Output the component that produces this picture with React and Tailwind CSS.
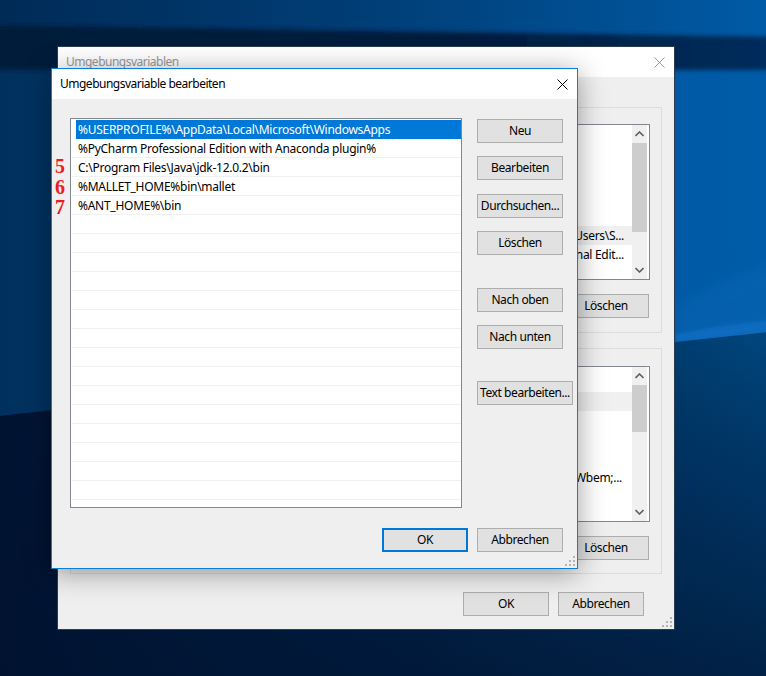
import React from "react"

const ROWS = [
  "%USERPROFILE%\\AppData\\Local\\Microsoft\\WindowsApps",
  "%PyCharm Professional Edition with Anaconda plugin%",
  "C:\\Program Files\\Java\\jdk-12.0.2\\bin",
  "%MALLET_HOME%bin\\mallet",
  "%ANT_HOME%\\bin",
  ...Array(15).fill(""),
]

const Wallpaper = () => (
  <svg className="absolute inset-0" width="766" height="676" viewBox="0 0 766 676">
    <defs>
      <linearGradient id="top" x1="0" x2="1" y1="0" y2="0">
        <stop offset="0" stopColor="#002a55" />
        <stop offset="0.5" stopColor="#003f78" />
        <stop offset="1" stopColor="#005ca8" />
      </linearGradient>
      <linearGradient id="band" x1="0" x2="1" y1="0" y2="0">
        <stop offset="0" stopColor="#001b3a" />
        <stop offset="0.6" stopColor="#001c3d" />
        <stop offset="1" stopColor="#012e5e" />
      </linearGradient>
      <linearGradient id="mid" x1="0" x2="1" y1="0" y2="0">
        <stop offset="0" stopColor="#00305c" />
        <stop offset="0.5" stopColor="#003f78" />
        <stop offset="0.87" stopColor="#005aa6" />
        <stop offset="1" stopColor="#005ca9" />
      </linearGradient>
      <linearGradient id="low" x1="0" x2="0" y1="0" y2="1">
        <stop offset="0" stopColor="#00487f" />
        <stop offset="0.35" stopColor="#003768" />
        <stop offset="1" stopColor="#012043" />
      </linearGradient>
      <linearGradient id="lowLeft" x1="0" x2="1" y1="0" y2="0">
        <stop offset="0" stopColor="#001230" stopOpacity="1" />
        <stop offset="0.55" stopColor="#001230" stopOpacity="0.55" />
        <stop offset="1" stopColor="#001230" stopOpacity="0" />
      </linearGradient>
      <filter id="soft" x="-5%" y="-20%" width="110%" height="140%">
        <feGaussianBlur stdDeviation="2" />
      </filter>
      <filter id="softer" x="-10%" y="-20%" width="120%" height="140%">
        <feGaussianBlur stdDeviation="8" />
      </filter>
    </defs>
    <rect x="-20" y="-20" width="806" height="500" fill="url(#mid)" />
    <rect x="-20" y="-20" width="806" height="60" fill="url(#top)" />
    <polygon points="-20,25 786,37 786,70 -20,70" fill="url(#band)" filter="url(#soft)" />
    <polygon points="676,305 720,282 786,258 786,332 676,340" fill="#0a66b4" opacity="0.45" filter="url(#softer)" />
    <polygon points="676,334 720,326 786,318 786,332 676,342" fill="#0a6cc0" filter="url(#soft)" />
    <polygon points="-20,418 786,330 786,700 -20,700" fill="url(#low)" />
    <polygon points="-20,418 786,330 786,700 -20,700" fill="url(#lowLeft)" />
  </svg>
)

const Grip = ({ color }) => (
  <svg className="absolute right-[1px] bottom-[1px]" width="11" height="11" viewBox="0 0 11 11" fill={color}>
    <rect x="8" y="0" width="2" height="2" />
    <rect x="4" y="4" width="2" height="2" />
    <rect x="8" y="4" width="2" height="2" />
    <rect x="0" y="8" width="2" height="2" />
    <rect x="4" y="8" width="2" height="2" />
    <rect x="8" y="8" width="2" height="2" />
  </svg>
)

const CloseIcon = ({ color }) => (
  <svg width="11" height="11" viewBox="0 0 11 11" stroke={color} strokeWidth="1" fill="none">
    <path d="M0.5 0.5 L10.5 10.5 M10.5 0.5 L0.5 10.5" />
  </svg>
)

const Button = ({ label, primary, className = "w-[86px]" }) => (
  <div
    className={`flex items-center justify-center h-[24px] shrink-0 bg-[#e1e1e1] text-[12px] tracking-[-0.42px] text-black whitespace-nowrap ${
      primary ? "border-2 border-[#0078d7]" : "border border-[#adadad]"
    } ${className}`}
  >
    {label}
  </div>
)

const Chevron = ({ down }) => (
  <svg width="9" height="6" viewBox="0 0 9 6" fill="none" stroke="#606060" strokeWidth="1.6">
    <path d={down ? "M0.5 1 L4.5 5 L8.5 1" : "M0.5 5 L4.5 1 L8.5 5"} />
  </svg>
)

const ScrollBar = ({ thumb }) => (
  <div className="flex flex-col w-[15px] mr-[2px] bg-[#f0f0f0]">
    <div className="flex items-center justify-center h-[18px]"><Chevron /></div>
    <div style={{ height: thumb }} className="bg-[#cdcdcd]" />
    <div className="flex-1" />
    <div className="flex items-center justify-center h-[18px]"><Chevron down /></div>
  </div>
)

const GroupBox = ({ children, thumb, className = "" }) => (
  <div className={`flex flex-col items-end h-[226px] border border-[#dcdcdc] pr-[11px] ${className}`}>
    <div className="flex w-[500px] h-[156px] bg-white border border-[#82878f]">
      <div className="flex-1 flex flex-col text-[12px] tracking-[-0.3px] text-black">{children}</div>
      <ScrollBar thumb={thumb} />
    </div>
    <Button label="Löschen" className="w-[86px] mt-[14px] mr-[1px]" />
  </div>
)

const OuterWindow = () => (
  <div className="absolute left-[57px] top-[46px] w-[618px] h-[584px] border border-[#2c3c50] bg-[#efefef]">
    <div className="flex items-center justify-between h-[30px] bg-white pl-[8px] pr-[9px] text-[12px] tracking-[-0.5px] text-[#999999]">
      <span>Umgebungsvariablen</span>
      <CloseIcon color="#999999" />
    </div>
    <div className="px-[12px] pt-[30px]">
      <GroupBox thumb={89} className="pt-[16px]">
        <div className="h-[101px]" />
        <div className="h-[19px] leading-[20px] bg-[#f0f0f0] text-right pr-[8px]">Users\S...</div>
        <div className="h-[19px] leading-[20px] text-right pr-[8px]">nal Edit...</div>
      </GroupBox>
      <GroupBox thumb={47} className="mt-[15px] pt-[17px]">
        <div className="h-[25px]" />
        <div className="h-[19px] bg-[#f0f0f0]" />
        <div className="h-[57px]" />
        <div className="h-[19px] leading-[20px] text-right pr-[10px]">Wbem;...</div>
      </GroupBox>
      <div className="flex justify-end gap-[9px] mt-[18px] mr-[18px]">
        <Button label="OK" />
        <Button label="Abbrechen" />
      </div>
    </div>
    <Grip color="#b4b4b4" />
  </div>
)

const PathList = () => (
  <div className="w-[392px] h-[390px] bg-white border border-[#82878f] pt-[1px] pl-[1px] text-[12px] tracking-[-0.27px] text-black">
    {ROWS.map((row, i) =>
      i === 0 ? (
        <div key={i} className="h-[19px] pl-[4px]">
          <div className="h-[19px] leading-[20px] pl-[2px] bg-[#0078d7] text-white">{row}</div>
        </div>
      ) : (
        <div key={i} className="h-[19px] leading-[20px] pl-[6px] border-b border-[#f0f0f0]">{row}</div>
      )
    )}
  </div>
)

const InnerDialog = () => (
  <div className="absolute left-[51px] top-[68px] w-[527px] h-[501px] border border-[#0b7fd8] bg-[#efefef] shadow-[0_4px_26px_rgba(0,0,0,0.38)]">
    <div className="flex items-center justify-between h-[30px] bg-white pl-[8px] pr-[9px] text-[12px] tracking-[-0.5px] text-black">
      <span>Umgebungsvariable bearbeiten</span>
      <CloseIcon color="#000000" />
    </div>
    <div className="flex pl-[18px] pt-[19px]">
      <PathList />
      <div className="flex flex-col items-start ml-[15px] mt-[1px]">
        <Button label="Neu" />
        <Button label="Bearbeiten" className="w-[86px] mt-[13px]" />
        <Button label="Durchsuchen..." className="w-[86px] mt-[14px]" />
        <Button label="Löschen" className="w-[86px] mt-[13px]" />
        <Button label="Nach oben" className="w-[86px] mt-[33px]" />
        <Button label="Nach unten" className="w-[86px] mt-[13px]" />
        <Button label="Text bearbeiten..." className="w-[96px] mt-[32px]" />
      </div>
    </div>
    <div className="flex justify-end gap-[9px] mt-[20px] pr-[14px]">
      <Button label="OK" primary />
      <Button label="Abbrechen" />
    </div>
    <Grip color="#b4b4b4" />
    {/* red row numbers added over the list margin */}
    <div className="absolute left-[3px] top-[87px] flex flex-col font-['Liberation_Serif',serif] font-bold text-[20px] leading-[20.5px] text-[#ed1c24]">
      <span>5</span>
      <span>6</span>
      <span>7</span>
    </div>
  </div>
)

export default function App() {
  return (
    <div className="relative w-[766px] h-[676px] overflow-hidden bg-[#001a38] font-['Noto_Sans',sans-serif]">
      <Wallpaper />
      <OuterWindow />
      <InnerDialog />
    </div>
  )
}
